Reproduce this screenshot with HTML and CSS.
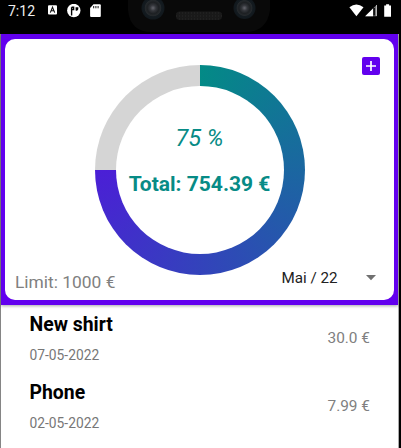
FILE: index.html
```
<!DOCTYPE html>
<html lang="en">
<head>
<meta charset="utf-8">
<title>Expenses</title>
<link rel="stylesheet" href="styles.css">
</head>
<body>
<div class="phone">
  <header class="status">
    <span class="clock">7:12</span>
    <svg class="notifications" width="56" height="16" viewBox="0 0 56 16">
      <rect x="1" y="1.3" width="9" height="9.2" rx="1" fill="#fff"/>
      <path d="M3.3 8.6 5.5 3.2 7.7 8.6M4.2 6.8h2.6" fill="none" stroke="#111" stroke-width="1.1"/>
      <circle cx="26.8" cy="6.5" r="6.7" fill="#fff"/>
      <path d="M24.6 11.5V3.2M24.6 3.3h2v2.2h-2" fill="none" stroke="#000" stroke-width="1.4"/>
      <path d="M28.600 3.300h2.700v1.500a2 2 0 0 1-2.700 1.800z" fill="#000"/>
      <path d="M46.5.3h6.3q1 0 1 1v10.6q0 1-1 1h-8.7q-1 0-1-1V4z" fill="#fff"/>
      <path d="M46.7 2v2.3M48.9 2v2.3M51.1 2v2.3" stroke="#111" stroke-width="1"/>
    </svg>
    <svg class="notch" width="144" height="34" viewBox="0 0 144 34">
      <defs>
        <radialGradient id="lens">
          <stop offset="0" stop-color="#65666d"/>
          <stop offset=".25" stop-color="#34363b"/>
          <stop offset=".5" stop-color="#1d2023"/>
          <stop offset=".68" stop-color="#25292c"/>
          <stop offset=".75" stop-color="#141b20"/>
          <stop offset="1" stop-color="#11181d"/>
        </radialGradient>
        <pattern id="mesh" width="3" height="3" patternUnits="userSpaceOnUse">
          <rect width="3" height="3" fill="#191919"/>
          <rect width="1" height="2" fill="#202020"/>
        </pattern>
      </defs>
      <path d="M0 0v10q2 22 24 22h93q22 0 25-22V0z" fill="#090909"/>
      <circle cx="25" cy="8" r="11.5" fill="url(#lens)"/>
      <circle cx="116.500" cy="8" r="11" fill="url(#lens)"/>
      <rect x="48" y="11.500" width="46" height="8.500" rx="4" fill="url(#mesh)"/>
    </svg>
    <svg class="signals" width="44" height="16" viewBox="0 0 44 16">
      <path d="M.4 3.300Q7.300-2.300 14.500 3.300L7.400 12.200z" fill="#fff"/>
      <path d="M16.200 12.200 27.800.8v11.400z" fill="#777"/>
      <path d="M16.200 12.200 24 4.500v7.700z" fill="#fff"/>
      <path d="M25.100 4v7.500" stroke="#000" stroke-width="1.500"/>
      <path d="M27.500 1v11" stroke="#ccc" stroke-width=".8"/>
      <path d="M35.200 1.500h1.900V.2h3v1.300h1.900v11.200h-6.800z" fill="#fff"/>
    </svg>
  </header>
  <section class="summary">
    <div class="card">
      <button class="add" aria-label="Add expense">
        <svg width="18" height="18" viewBox="0 0 18 18"><path d="M9 4v10M4 9h10" stroke="#fff" stroke-width="1.700"/></svg>
      </button>
      <div class="ring">
        <div class="ring-center">
          <span class="percent">75 %</span>
          <strong class="total">Total: 754.39 €</strong>
        </div>
      </div>
      <div class="card-footer">
        <span class="limit">Limit: 1000 €</span>
        <div class="month">
          <span>Mai / 22</span>
          <svg width="10" height="6" viewBox="0 0 10 6"><path d="M0 0h10L5 5.300z" fill="#707070"/></svg>
        </div>
      </div>
    </div>
  </section>
  <main class="list">
    <article class="item">
      <div>
        <h2>New shirt</h2>
        <time>07-05-2022</time>
      </div>
      <span class="price">30.0 €</span>
    </article>
    <article class="item">
      <div>
        <h2>Phone</h2>
        <time>02-05-2022</time>
      </div>
      <span class="price">7.99 €</span>
    </article>
  </main>
</div>
</body>
</html>
```
FILE: styles.css
```
* { box-sizing: border-box; }
body {
  margin: 0;
  font-family: Roboto, sans-serif;
  background: #000;
  overflow: hidden;
}
.phone {
  width: 399px;
  height: 448px;
  border-left: 1px solid #858585;
  border-right: 1px solid #aaa;
  background: #fff;
  display: flex;
  flex-direction: column;
}
.status {
  flex: none;
  height: 34px;
  margin: 0 -1px;
  background: #000;
  position: relative;
  display: flex;
  align-items: flex-start;
  padding: 4px 6.500px 0 8px;
}
.clock {
  color: #eee;
  font-size: 14px;
  line-height: 14px;
  width: 39px;
}
.signals { margin-left: auto; }
.notch {
  position: absolute;
  left: 128px;
  top: 0;
}
.summary {
  flex: none;
  height: 271px;
  padding: 5px 4px;
  background: #6200ee;
  box-shadow: 0 1px 3px rgba(0, 0, 0, .35);
}
.card {
  height: 261px;
  position: relative;
  border-radius: 10px;
  background: #fff;
  padding: 25.500px 0 0;
}
.add {
  position: absolute;
  right: 14.500px;
  top: 18px;
  width: 18px;
  height: 18px;
  padding: 0;
  border: 0;
  border-radius: 2px;
  background: #6200ee;
}
.add svg { display: block; }
.ring {
  width: 210px;
  height: 210px;
  margin-left: 89.500px;
  padding: 21px;
  border-radius: 50%;
  background: conic-gradient(#038a86 0deg, #4b1fd6 270deg, #d5d5d5 270deg);
}
.ring-center {
  height: 168px;
  border-radius: 50%;
  background: #fff;
  color: #078b86;
  display: flex;
  flex-direction: column;
  align-items: center;
  padding-top: 38px;
  white-space: nowrap;
}
.percent {
  font-size: 23.500px;
  line-height: 28px;
  font-style: italic;
}
.total {
  margin-top: 20px;
  font-size: 21px;
  line-height: 24px;
}
.card-footer {
  display: flex;
  justify-content: space-between;
  padding: 0 18px 0 10px;
  margin-top: -5px;
}
.limit {
  color: #808080;
  font-size: 17.400px;
  line-height: 24px;
}
.month {
  display: flex;
  align-items: center;
  gap: 28.500px;
  height: 17px;
  color: #222;
  font-size: 15.200px;
}
.list { padding: 9px 28px 0 28.500px; }
.item {
  height: 68px;
  display: flex;
  justify-content: space-between;
}
h2 {
  margin: 0;
  color: #000;
  font-size: 19.400px;
  line-height: 22px;
}
time {
  display: block;
  margin-top: 10px;
  color: #777;
  font-size: 13.800px;
  line-height: 18px;
}
.price {
  margin-top: 14px;
  color: #808080;
  font-size: 15.400px;
  line-height: 20px;
}
```
